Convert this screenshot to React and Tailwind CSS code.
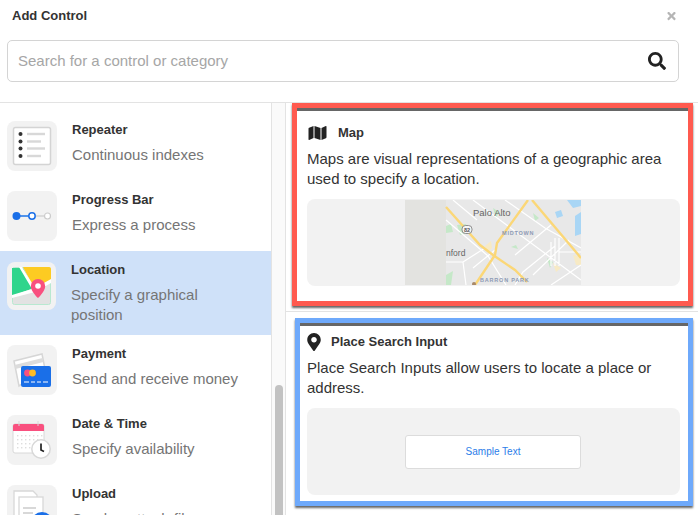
import React from 'react';
import { FaMap, FaMapMarkerAlt, FaSearch, FaTimes } from 'react-icons/fa';

function RepeaterIcon() {
  return (
    <svg width="40" height="40" viewBox="0 0 40 40">
      <rect x="1.500" y="1.500" width="37" height="37" rx="2" fill="#fff" stroke="#d4d4d4" strokeWidth="1.500" />
      {[8, 15.500, 22.500, 30].map((y, i) => (
        <g key={y}>
          <circle cx="8.500" cy={y} r="2" fill="#333" />
          <rect x="15" y={y - 1.200} width={i % 2 ? 14 : 18} height="2.400" fill="#d8d8d8" />
        </g>
      ))}
    </svg>
  );
}

function ProgressIcon() {
  return (
    <svg width="40" height="12" viewBox="0 0 40 12">
      <line x1="6" y1="6" x2="20" y2="6" stroke="#1a73e8" strokeWidth="1.500" />
      <line x1="24" y1="6" x2="33" y2="6" stroke="#ccc" strokeWidth="1.200" />
      <circle cx="4.500" cy="6" r="4" fill="#1a6fe8" />
      <circle cx="20" cy="6" r="3.200" fill="#fff" stroke="#1a6fe8" strokeWidth="1.500" />
      <circle cx="35.500" cy="6" r="3" fill="#fff" stroke="#ccc" strokeWidth="1.200" />
    </svg>
  );
}

function LocationIcon() {
  return (
    <svg width="39" height="38" viewBox="0 0 39 38">
      <rect x="0.500" y="0.500" width="38" height="37" rx="2" fill="#e2e2e2" stroke="#b8e8d0" />
      <path d="M0 1h11l11 20L0 29z" fill="#2fd58c" />
      <path d="M11 0h26a2 2 0 0 1 2 2v11l-17 8z" fill="#fdcb22" />
      <path d="M10 0l13 21 16-9v4L23 25 0 31v-3l20-6L7 0z" fill="#fff" />
      <path d="M26 12a7.200 7.200 0 0 1 7.200 7.200c0 5-7.200 11.800-7.200 11.800s-7.200-6.800-7.200-11.800A7.200 7.200 0 0 1 26 12z" fill="#f9507f" />
      <circle cx="26" cy="19" r="2.800" fill="#fff" />
    </svg>
  );
}

function PaymentIcon() {
  return (
    <svg width="40" height="36" viewBox="0 0 40 36">
      <path d="M2 9l28-7 3 15-26 17z" fill="#fff" stroke="#d6d6d6" strokeWidth="1.500" />
      <path d="M2.500 13l28-7 1 4-28 7z" fill="#dcdcdc" />
      <rect x="9" y="14" width="30" height="21" rx="2" fill="#1a6fe8" />
      <circle cx="15.500" cy="21" r="3.400" fill="#f9507f" />
      <circle cx="20.500" cy="21" r="3.400" fill="#fdbc22" />
      <path d="M12 30h5M19 30h4M25 30h4M31 30h5" stroke="#fff" strokeWidth="1" />
    </svg>
  );
}

function DateIcon() {
  return (
    <svg width="40" height="38" viewBox="0 0 40 38">
      <rect x="1" y="3" width="31" height="29" rx="2" fill="#fff" stroke="#d8d8d8" />
      <path d="M1 10V5a2 2 0 0 1 2-2h27a2 2 0 0 1 2 2v5z" fill="#f9507f" />
      <path d="M7 0v5M26 0v5" stroke="#d8d8d8" strokeWidth="1" />
      {[14, 18, 22, 26].map((y) => [5, 9, 13, 17, 21, 25, 29].map((x) => <rect key={`${x}-${y}`} x={x} y={y} width="1.400" height="1.400" fill="#ddd" />))}
      <circle cx="29" cy="28" r="9.200" fill="#fff" stroke="#d8d8d8" strokeWidth="1.500" />
      <path d="M29 22.500V29l3 1.500" fill="none" stroke="#222" strokeWidth="1.700" />
    </svg>
  );
}

function UploadIcon() {
  return (
    <svg width="40" height="40" viewBox="0 0 40 40">
      <path d="M2 40V1h19l4 4v5" fill="#fff" stroke="#d8d8d8" strokeWidth="1.300" />
      <rect x="7" y="7" width="24" height="33" fill="#fff" stroke="#d8d8d8" strokeWidth="1.300" />
      <rect x="11" y="17" width="13" height="2" fill="#d8d8d8" />
      <rect x="11" y="22" width="10" height="2" fill="#d8d8d8" />
      <circle cx="30" cy="33" r="11" fill="#1a6fe8" />
    </svg>
  );
}

function SideItem({ icon, title, text, active }) {
  return (
    <div className={`flex gap-[15px] pl-[7px] ${active ? 'h-[84px] bg-[#cfe1f9] pt-[11px]' : 'h-[70px] pt-[10px]'}`}>
      <div className={`flex shrink-0 items-center justify-center rounded-lg bg-[#f2f2f2] ${active ? 'h-[48px] w-[49px]' : 'h-[50px] w-[50px]'}`}>{icon}</div>
      <div className={`w-[175px] ${active ? '-mt-px' : ''}`}>
        <div className="text-[13px] leading-[17px] font-bold text-[#333]">{title}</div>
        <div className="mt-[7px] text-[15px] leading-5 text-[#757575]">{text}</div>
      </div>
    </div>
  );
}

function MapPreview() {
  return (
    <svg width="176" height="85" viewBox="0 0 176 85" className="block">
      <rect width="176" height="85" fill="#e8e8e8" />
      <rect width="41" height="85" fill="#e3e3e0" />
      <path d="M170 16l6-4v22l-6 2zM150 12l6-2 2 6-6 2zM162 0h14v6l-8 2z" fill="#a9d6f5" />
      <path d="M52 25l9-1 2 9-8 2zM41 26l5-2 2 8-7 1zM88 8l6 4-3 6zM142 58l6 4-3 6zM106 47l5-2 2 4zM41 75l7-4-2 14h-5zM128 13l6 5-4 3z" fill="#c5e8c8" />
      <path d="M80 46l6-5 1 7-5 5zM148 63l8 5-5 4zM168 55l8 2v8h-5z" fill="#f7eac5" />
      <g fill="none" stroke="#fff" strokeWidth="1.200">
        <path d="M68 0l108 80M41 20l42 36 18 29M100 0l40 28 36 20M41 62h17l3 23M110 55l36-30M128 75l36-35M90 50l-22 18M58 62l22-14M150 46l-32 26-8 13M146 42v24M150 38v28M154 38v28M176 52h-22M48 0l24 20M146 85l30-20" />
      </g>
      <g fill="none" stroke="#fbd777" strokeWidth="2.400">
        <path d="M41 7l34 38 13 10 22 15 12 12" />
        <path d="M70 85l20-30 2-12 31-43" />
        <path d="M127 0l49 58" />
      </g>
      <rect x="57" y="25.500" width="10" height="8" rx="3.500" fill="#f5f5f5" stroke="#777" strokeWidth="0.800" />
      <text x="62" y="31.500" textAnchor="middle" fontSize="5.500" fontFamily="Liberation Sans" fontWeight="700" fill="#555">82</text>
      <text x="68" y="16" fontSize="9.500" fontFamily="Liberation Sans" fill="#666">Palo Alto</text>
      <text x="97" y="35" fontSize="5.500" letterSpacing="0.800" fontFamily="Liberation Sans" fontWeight="700" fill="#8d9ab5">MIDTOWN</text>
      <text x="41" y="56" fontSize="8.500" fontFamily="Liberation Sans" fill="#666">nford</text>
      <text x="75" y="82" fontSize="5.500" letterSpacing="0.800" fontFamily="Liberation Sans" fontWeight="700" fill="#8d9ab5">BARRON PARK</text>
      <circle cx="69" cy="84" r="2" fill="#a8896a" />
    </svg>
  );
}

export default function App() {
  return (
    <div className="relative h-[515px] w-[698px] overflow-hidden bg-white font-['Liberation_Sans',sans-serif] text-[#333]">
      <div className="h-[103px] border-b border-[#e3e3e3]">
        <div className="flex items-center justify-between pl-3 pr-[21px] pt-[8px]">
          <span className="text-[13px] leading-4 font-bold">Add Control</span>
          <FaTimes className="h-3 w-[11px] text-[#b5b5b5]" />
        </div>
        <div className="ml-[7px] mt-[16px] flex h-[42px] w-[672px] items-center justify-between rounded-[5px] border border-[#d4d4d4] pl-[10px] pr-[12px]">
          <span className="text-[15px] text-[#a6a6a6]">Search for a control or category</span>
          <FaSearch className="h-[18px] w-[18px] text-[#222]" />
        </div>
      </div>
      <div className="flex h-[412px]">
        <div className="h-full w-[272px] shrink-0 overflow-hidden border-r border-[#e3e3e3] pt-2">
          <SideItem icon={<RepeaterIcon />} title="Repeater" text="Continuous indexes" />
          <SideItem icon={<ProgressIcon />} title="Progress Bar" text="Express a process" />
          <SideItem icon={<LocationIcon />} title="Location" text="Specify a graphical position" active />
          <SideItem icon={<PaymentIcon />} title="Payment" text="Send and receive money" />
          <SideItem icon={<DateIcon />} title="Date & Time" text="Specify availability" />
          <SideItem icon={<UploadIcon />} title="Upload" text="Send or attach files" />
        </div>
        <div className="flex h-full w-[14px] shrink-0 flex-col justify-end border-r border-[#e3e3e3] bg-[#fafafa] pl-[3px] pr-[2px]">
          <div className="h-[130px] rounded-t-md bg-[#c2c2c2]" />
        </div>
        <div className="min-w-0 flex-1">
          <div className="ml-[6px] mr-[5px] h-[203px] border-[5px] border-[#ff5a4f] bg-white pl-[10px] pr-[8px] pt-[16px] shadow-[0_2px_2px_#666,inset_0_3px_0_#666]">
            <div className="flex h-[18px] items-center gap-[10px]">
              <FaMap className="h-4 w-[21px] text-[#222]" />
              <span className="text-[13px] font-bold">Map</span>
            </div>
            <p className="mt-[7px] text-[15px] leading-5">Maps are visual representations of a geographic area used to specify a location.</p>
            <div className="mt-[10px] flex h-[87px] justify-center rounded-lg bg-[#f2f2f2] pr-px pt-px">
              <MapPreview />
            </div>
          </div>
          <div className="mt-[5px] border-t border-[#e3e3e3]" />
          <div className="mt-[6px] ml-[9px] mr-[5px] h-[188px] border-[5px] border-[#6ea9fb] bg-white pl-[7px] pr-[8px] pt-[10px] shadow-[0_2px_2px_#666,inset_0_3px_0_#666]">
            <div className="flex h-[18px] items-center gap-[10px]">
              <FaMapMarkerAlt className="h-[18px] w-[14px] text-[#222]" />
              <span className="text-[13px] font-bold">Place Search Input</span>
            </div>
            <p className="mt-[7px] text-[15px] leading-5">Place Search Inputs allow users to locate a place or address.</p>
            <div className="mt-[10px] flex h-[87px] items-center justify-center rounded-lg bg-[#f2f2f2] pr-px">
              <div className="flex h-[34px] w-[176px] items-center justify-center rounded-[3px] border border-[#dcdcdc] bg-white text-[10px] text-[#2b7de9]">Sample Text</div>
            </div>
          </div>
        </div>
      </div>
    </div>
  );
}
